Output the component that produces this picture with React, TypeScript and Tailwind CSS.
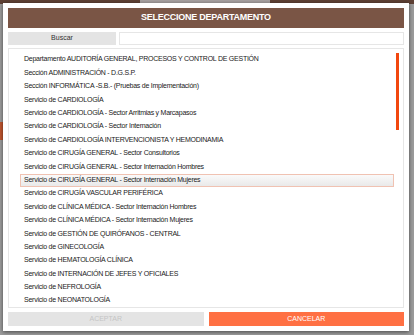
import React from "react";

const items = [
  "Departamento AUDITORÍA GENERAL, PROCESOS Y CONTROL DE GESTIÓN",
  "Sección ADMINISTRACIÓN - D.G.S.P.",
  "Sección INFORMÁTICA -S.B.- (Pruebas de Implementación)",
  "Servicio de CARDIOLOGÍA",
  "Servicio de CARDIOLOGÍA - Sector Arritmias y Marcapasos",
  "Servicio de CARDIOLOGÍA - Sector Internación",
  "Servicio de CARDIOLOGÍA INTERVENCIONISTA Y HEMODINAMIA",
  "Servicio de CIRUGÍA GENERAL - Sector Consultorios",
  "Servicio de CIRUGÍA GENERAL - Sector Internación Hombres",
  "Servicio de CIRUGÍA GENERAL - Sector Internación Mujeres",
  "Servicio de CIRUGÍA VASCULAR PERIFÉRICA",
  "Servicio de CLÍNICA MÉDICA - Sector Internación Hombres",
  "Servicio de CLÍNICA MÉDICA - Sector Internación Mujeres",
  "Servicio de GESTIÓN DE QUIRÓFANOS - CENTRAL",
  "Servicio de GINECOLOGÍA",
  "Servicio de HEMATOLOGÍA CLÍNICA",
  "Servicio de INTERNACIÓN DE JEFES Y OFICIALES",
  "Servicio de NEFROLOGÍA",
  "Servicio de NEONATOLOGÍA",
];

export default function App() {
  return (
    <div
      className="relative w-[414px] h-[335px] overflow-hidden bg-[#9c9c9c]"
      style={{ fontFamily: '"Liberation Sans", Arial, sans-serif' }}
    >
      {/* background page hints */}
      <div className="flex h-[4px]">
        <div className="w-[140px] bg-[#5e4034]" />
        <div className="w-[130px] bg-[#a8a2a2]" />
        <div className="flex-1 bg-[#5e4034]" />
      </div>
      <div className="absolute left-0 top-[122px] w-[4px] h-[18px] bg-[#c0562e]" />

      {/* modal */}
      <div className="absolute left-[3px] top-[3px] w-[406px] h-[328px] bg-white shadow-[0_1px_4px_rgba(0,0,0,0.55)] p-[5px] flex flex-col">
        <div className="h-[20px] bg-[#7a5545] flex items-center justify-center">
          <span className="text-white font-bold text-[9px] tracking-[-0.25px]">
            SELECCIONE DEPARTAMENTO
          </span>
        </div>

        <div className="mt-[4px] h-[13px] flex gap-[3px]">
          <div className="w-[108px] bg-[#e4e4e4] flex items-center justify-center text-[7px] text-[#333]">
            Buscar
          </div>
          <div className="flex-1 border border-[#e6e6e6] bg-white" />
        </div>

        <div className="relative mt-[3px] h-[260px] border border-[#e6e6e6] overflow-hidden pt-[4px] pl-[11px] pr-[9px]">
          {items.map((t, i) => (
            <div
              key={i}
              className={
                i === 9
                  ? "h-[13.4px] flex items-center pl-[3px] border border-[#f0c2b2] bg-gradient-to-b from-[#fafafa] to-[#e9e9e9] text-[7px] tracking-[-0.25px] text-[#1a1a1a] whitespace-nowrap"
                  : "h-[13.4px] flex items-center pl-[3px] border border-transparent text-[7px] tracking-[-0.25px] text-[#1a1a1a] whitespace-nowrap"
              }
            >
              {t}
            </div>
          ))}
          <div className="absolute right-[4px] top-[4px] w-[3px] h-[77px] bg-[#f2470f]" />
        </div>

        <div className="mt-[4px] h-[14px] flex gap-[5px]">
          <div className="flex-1 bg-[#e4e4e4] flex items-center justify-center text-[7px] text-[#c4c4c4]">
            ACEPTAR
          </div>
          <div className="flex-1 bg-[#ff7043] flex items-center justify-center text-[7px] text-white">
            CANCELAR
          </div>
        </div>
      </div>
    </div>
  );
}
